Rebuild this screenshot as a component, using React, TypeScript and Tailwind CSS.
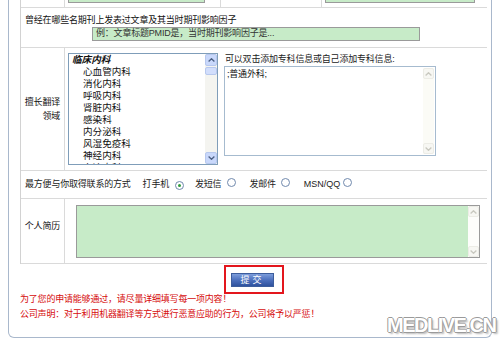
import * as React from "react";

const specialties = ["心血管内科", "消化内科", "呼吸内科", "肾脏内科", "感染科", "内分泌科", "风湿免疫科", "神经内科", "血液内科"];

const Arrow = ({ up, color }: { up?: boolean; color: string }) => (
    <svg width="7" height="4" viewBox="0 0 7 4">
        <path d={up ? "M0.6 3.5 L3.5 0.7 L6.4 3.5" : "M0.6 0.5 L3.5 3.3 L6.4 0.5"} stroke={color} strokeWidth="1.3" fill="none" />
    </svg>
);

// xp style scrollbar in the specialty listbox
const ListScrollbar = () => (
    <div className="flex w-[12px] flex-col bg-[#f4f4f0]">
        <div className="flex h-[12px] items-center justify-center rounded-[2px] border border-[#b7c8ee] bg-[#c9d8fb]">
            <Arrow up color="#4d6185" />
        </div>
        <div className="mt-[1px] h-[8px] rounded-[2px] border border-[#b7c8ee] bg-[#d2defc]" />
        <div className="flex-1" />
        <div className="flex h-[12px] items-center justify-center rounded-[2px] border border-[#b7c8ee] bg-[#c9d8fb]">
            <Arrow color="#4d6185" />
        </div>
    </div>
);

// disabled scrollbar inside the textareas
const FaintScrollbar = ({ bg }: { bg: string }) => (
    <div className={`flex w-[11px] flex-col ${bg}`}>
        <div className="flex h-[11px] items-center justify-center rounded-[2px] border border-[#ecece6] bg-[#f7f7f3]">
            <Arrow up color="#c9c9c0" />
        </div>
        <div className="flex-1" />
        <div className="flex h-[11px] items-center justify-center rounded-[2px] border border-[#ecece6] bg-[#f7f7f3]">
            <Arrow color="#c9c9c0" />
        </div>
    </div>
);

const Radio = ({ checked }: { checked?: boolean }) => (
    <span className="inline-flex h-[9px] w-[9px] items-center justify-center rounded-full border border-[#7089ad] bg-white">
        {checked && <span className="h-[3px] w-[3px] rounded-full bg-[#2f9b3c]" />}
    </span>
);

export default function App() {
    return (
        <div className="relative h-[346px] w-[500px] overflow-hidden bg-white font-['Liberation_Sans','Noto_Sans_CJK_SC',sans-serif] text-[9px] tracking-[-0.2px] text-[#111]">
            <div className="ml-[8px] h-[338px] w-[484px] rounded-b-[6px] border-x border-b border-[#a9b8cc] pl-[11px]">
                <div className="w-[467px] border-l border-[#d2d2d2]">
                    {/* row cut off at the top */}
                    <div className="flex h-[8px] border-b border-[#dadada]">
                        <div className="w-[44px] border-r border-[#dadada]" />
                        <div className="w-[156px] border-r border-[#dadada] pl-[3px]">
                            <div className="h-[3px] w-[137px] border-x border-b border-[#9a9a9a] bg-[#c7ebc8]" />
                        </div>
                        <div className="w-[101px] border-r border-[#dadada]" />
                        <div className="pl-[3px]">
                            <div className="h-[3px] w-[150px] border-x border-b border-[#9a9a9a] bg-[#c7ebc8]" />
                        </div>
                    </div>

                    {/* journals */}
                    <div className="h-[40px] border-b border-[#dadada] pl-[4px] pt-[6px]">
                        <div className="leading-[12px]">曾经在哪些名期刊上发表过文章及其当时期刊影响因子</div>
                        <div className="ml-[67px] mt-[1px] flex h-[14px] w-[328px] items-center border border-[#9a9a9a] bg-[#c7ebc8] pl-[3px] text-[#333]">
                            例：文章标题PMID是，当时期刊影响因子是...
                        </div>
                    </div>

                    {/* specialties */}
                    <div className="flex h-[123px] border-b border-[#dadada]">
                        <div className="flex w-[44px] items-center justify-end border-r border-[#dadada] pr-[4px] text-right leading-[14px]">
                            擅长翻译
                            <br />
                            领域
                        </div>
                        <div className="flex pl-[3px] pt-[5px]">
                            <div className="flex h-[112px] w-[150px] overflow-hidden border border-[#7f9db9] bg-white">
                                <div className="flex-1 overflow-hidden text-[9.6px] leading-[12px] tracking-[0px]">
                                    <div className="pl-[3px] font-bold italic">临床内科</div>
                                    {specialties.map((s) => (
                                        <div key={s} className="pl-[14px]">
                                            {s}
                                        </div>
                                    ))}
                                </div>
                                <ListScrollbar />
                            </div>
                            <div className="ml-[6px] flex flex-col">
                                <div className="pl-[1px] leading-[12px] text-[#222]">可以双击添加专科信息或自己添加专科信息:</div>
                                <div className="mt-[1px] flex h-[90px] w-[212px] border border-[#a6bbcf] bg-white">
                                    <div className="flex-1 pl-[2px] pt-[1px] leading-[12px]">;普通外科;</div>
                                    <div className="flex py-[1px] pr-[1px]">
                                        <FaintScrollbar bg="bg-[#fbfbf6]" />
                                    </div>
                                </div>
                            </div>
                        </div>
                    </div>

                    {/* contact */}
                    <div className="flex h-[28px] items-center border-b border-[#dadada] pl-[4px] text-[#222]">
                        <span>最方便与你取得联系的方式</span>
                        <span className="ml-[12px]">打手机</span>
                        <span className="ml-[6px]"><Radio checked /></span>
                        <span className="ml-[11px]">发短信</span>
                        <span className="ml-[6px]"><Radio /></span>
                        <span className="ml-[13px]">发邮件</span>
                        <span className="ml-[5px]"><Radio /></span>
                        <span className="ml-[14px] tracking-[0px]">MSN/QQ</span>
                        <span className="ml-[3px]"><Radio /></span>
                    </div>

                    {/* resume */}
                    <div className="flex h-[65px] border-b border-[#dadada]">
                        <div className="w-[44px] border-r border-[#dadada] pr-[4px] pt-[21px] text-right leading-[12px]">个人简历</div>
                        <div className="pl-[11px] pt-[6px]">
                            <div className="flex h-[53px] w-[404px] border border-[#9a9a9a] bg-[#c7ebc8]">
                                <div className="flex-1" />
                                <FaintScrollbar bg="bg-[#fdfdfb]" />
                            </div>
                        </div>
                    </div>
                </div>

                {/* submit */}
                <div className="flex w-[467px] justify-center pl-[1px]">
                    <div className="mt-[1px] h-[29px] w-[60px] border-2 border-[#e3161d] pl-[5px] pt-[6px]">
                        <button className="flex h-[14px] w-[43px] items-center justify-center border border-[#3d5d9c] bg-gradient-to-b from-[#7d9ddb] via-[#4d70bd] to-[#2f529e] text-[9px] leading-none tracking-[3px] text-white">
                            提交
                        </button>
                    </div>
                </div>

                <div className="-mt-[2px] text-[9px] leading-[15px] text-[#d60c0c]">
                    <div>为了您的申请能够通过，请尽量详细填写每一项内容！</div>
                    <div>公司声明：对于利用机器翻译等方式进行恶意应助的行为，公司将予以严惩！</div>
                </div>
            </div>

            <div className="absolute left-[387px] top-[315px] font-['Liberation_Sans',sans-serif] text-[20px] font-bold leading-[20px] tracking-[-1.5px] text-white [text-shadow:-1px_0_#9a9a9a,1px_0_#9a9a9a,0_-1px_#9a9a9a,0_1px_#9a9a9a,2px_2px_2px_#b8b8b8]">
                MEDLIVE.CN
            </div>
        </div>
    );
}
